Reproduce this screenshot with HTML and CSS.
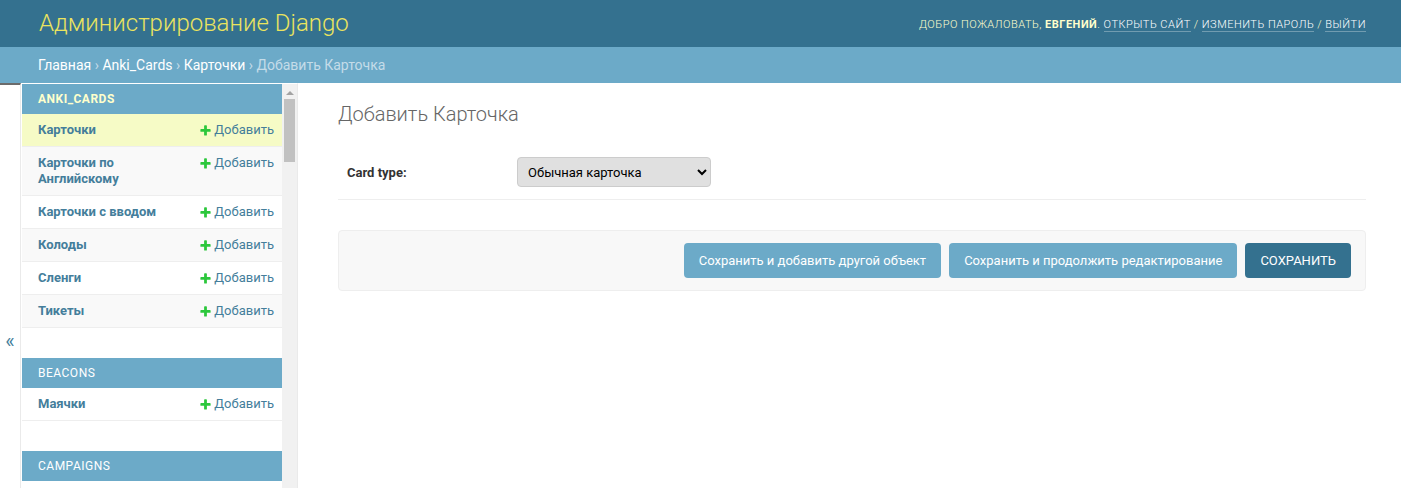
FILE: index.html
```html
<!DOCTYPE html>
<html lang="ru">
<head>
<meta charset="utf-8">
<title>Добавить Карточка | Администрирование Django</title>
<link rel="stylesheet" href="styles.css">
</head>
<body>
<div class="container">
  <header class="header">
    <div class="branding"><h1 class="site-name">Администрирование Django</h1></div>
    <div class="user-tools">
      Добро пожаловать, <strong>Евгений</strong>.
      <a href="#">Открыть сайт</a> /
      <a href="#">Изменить пароль</a> /
      <a href="#">Выйти</a>
    </div>
  </header>
  <div class="breadcrumbs">
    <a href="#">Главная</a> › <a href="#">Anki_Cards</a> › <a href="#">Карточки</a> › Добавить Карточка
  </div>
  <div class="main">
    <button class="toggle-nav" type="button" aria-label="Переключить навигацию">«</button>
    <nav class="nav-sidebar">
      <div class="nav-inner">
        <div class="module current-app">
          <table>
            <caption><a href="#" class="section">Anki_Cards</a></caption>
            <tbody>
              <tr class="row1 current-model"><th><a href="#">Карточки</a></th><td><a href="#" class="addlink"><svg class="plus" viewBox="0 0 1792 1792"><path d="M1600 796v192q0 40-28 68t-68 28h-416v416q0 40-28 68t-68 28h-192q-40 0-68-28t-28-68v-416h-416q-40 0-68-28t-28-68v-192q0-40 28-68t68-28h416v-416q0-40 28-68t68-28h192q40 0 68 28t28 68v416h416q40 0 68 28t28 68z"/></svg>Добавить</a></td></tr>
              <tr class="row2"><th><a href="#">Карточки по Английскому</a></th><td><a href="#" class="addlink"><svg class="plus" viewBox="0 0 1792 1792"><path d="M1600 796v192q0 40-28 68t-68 28h-416v416q0 40-28 68t-68 28h-192q-40 0-68-28t-28-68v-416h-416q-40 0-68-28t-28-68v-192q0-40 28-68t68-28h416v-416q0-40 28-68t68-28h192q40 0 68 28t28 68v416h416q40 0 68 28t28 68z"/></svg>Добавить</a></td></tr>
              <tr class="row1"><th><a href="#">Карточки с вводом</a></th><td><a href="#" class="addlink"><svg class="plus" viewBox="0 0 1792 1792"><path d="M1600 796v192q0 40-28 68t-68 28h-416v416q0 40-28 68t-68 28h-192q-40 0-68-28t-28-68v-416h-416q-40 0-68-28t-28-68v-192q0-40 28-68t68-28h416v-416q0-40 28-68t68-28h192q40 0 68 28t28 68v416h416q40 0 68 28t28 68z"/></svg>Добавить</a></td></tr>
              <tr class="row2"><th><a href="#">Колоды</a></th><td><a href="#" class="addlink"><svg class="plus" viewBox="0 0 1792 1792"><path d="M1600 796v192q0 40-28 68t-68 28h-416v416q0 40-28 68t-68 28h-192q-40 0-68-28t-28-68v-416h-416q-40 0-68-28t-28-68v-192q0-40 28-68t68-28h416v-416q0-40 28-68t68-28h192q40 0 68 28t28 68v416h416q40 0 68 28t28 68z"/></svg>Добавить</a></td></tr>
              <tr class="row1"><th><a href="#">Сленги</a></th><td><a href="#" class="addlink"><svg class="plus" viewBox="0 0 1792 1792"><path d="M1600 796v192q0 40-28 68t-68 28h-416v416q0 40-28 68t-68 28h-192q-40 0-68-28t-28-68v-416h-416q-40 0-68-28t-28-68v-192q0-40 28-68t68-28h416v-416q0-40 28-68t68-28h192q40 0 68 28t28 68v416h416q40 0 68 28t28 68z"/></svg>Добавить</a></td></tr>
              <tr class="row2"><th><a href="#">Тикеты</a></th><td><a href="#" class="addlink"><svg class="plus" viewBox="0 0 1792 1792"><path d="M1600 796v192q0 40-28 68t-68 28h-416v416q0 40-28 68t-68 28h-192q-40 0-68-28t-28-68v-416h-416q-40 0-68-28t-28-68v-192q0-40 28-68t68-28h416v-416q0-40 28-68t68-28h192q40 0 68 28t28 68v416h416q40 0 68 28t28 68z"/></svg>Добавить</a></td></tr>
            </tbody>
          </table>
        </div>
        <div class="module">
          <table>
            <caption><a href="#" class="section">Beacons</a></caption>
            <tbody>
              <tr class="row1"><th><a href="#">Маячки</a></th><td><a href="#" class="addlink"><svg class="plus" viewBox="0 0 1792 1792"><path d="M1600 796v192q0 40-28 68t-68 28h-416v416q0 40-28 68t-68 28h-192q-40 0-68-28t-28-68v-416h-416q-40 0-68-28t-28-68v-192q0-40 28-68t68-28h416v-416q0-40 28-68t68-28h192q40 0 68 28t28 68v416h416q40 0 68 28t28 68z"/></svg>Добавить</a></td></tr>
            </tbody>
          </table>
        </div>
        <div class="module">
          <table>
            <caption><a href="#" class="section">Campaigns</a></caption>
          </table>
        </div>
      </div>
      <div class="scrollbar" aria-hidden="true">
        <span class="scroll-arrow"></span>
        <span class="scroll-thumb"></span>
      </div>
    </nav>
    <div class="content">
      <h1 class="page-title">Добавить Карточка</h1>
      <form class="change-form">
        <fieldset class="fieldset">
          <div class="form-row">
            <label class="required" for="id_card_type">Card type:</label>
            <select id="id_card_type" class="select">
              <option>Обычная карточка</option>
              <option>Карточка с вводом</option>
            </select>
          </div>
        </fieldset>
        <div class="submit-row">
          <button type="button" class="btn">Сохранить и добавить другой объект</button>
          <button type="button" class="btn">Сохранить и продолжить редактирование</button>
          <button type="button" class="btn btn-default">Сохранить</button>
        </div>
      </form>
    </div>
  </div>
</div>
</body>
</html>
```
FILE: styles.css
```css
html, body {
  margin: 0;
  padding: 0;
  height: 100%;
  overflow: hidden;
}
body {
  font-family: Roboto, "Liberation Sans", Arial, sans-serif;
  font-size: 14px;
  color: #333;
  background: #fff;
}
a { color: #447e9b; text-decoration: none; }

.container {
  display: flex;
  flex-direction: column;
}

/* Header */
.header {
  display: flex;
  justify-content: space-between;
  align-items: center;
  padding: 10px 35px 10px 39px;
  background: #34718f;
  color: #ffc;
}
.site-name {
  margin: 0;
  font-size: 24px;
  font-weight: 300;
  color: #ebe45e;
  line-height: 27px;
}
.user-tools {
  font-size: 11px;
  font-weight: 300;
  letter-spacing: 0.5px;
  text-transform: uppercase;
  text-align: right;
  color: #ffc;
  padding-top: 2px;
}
.user-tools strong { font-weight: 700; }
.user-tools a {
  color: #fff;
  border-bottom: 1px solid rgba(255, 255, 255, 0.3);
}

/* Breadcrumbs */
.breadcrumbs {
  background: #6caac8;
  padding: 10px 35px 10px 38px;
  font-size: 14px;
  line-height: 16px;
  color: #c4dce8;
}
.breadcrumbs a { color: #fff; }

/* Main */
.main {
  display: flex;
  min-height: 514px;
}
.toggle-nav {
  flex: 0 0 21px;
  width: 21px;
  padding: 0;
  margin: 0;
  border: 0;
  border-top: 2px solid #6b6b6b;
  border-right: 1px solid #eaeaea;
  background: #fff;
  color: #447e9b;
  font-family: Roboto, "Liberation Sans", Arial, sans-serif;
  font-size: 20px;
  display: flex;
  align-items: center;
  justify-content: center;
  box-sizing: border-box;
}
.nav-sidebar {
  flex: 0 0 277px;
  display: flex;
  box-sizing: border-box;
  height: 100vh;
  overflow: hidden;
  padding-left: 1px;
  border-top: 1px solid transparent;
  border-right: 1px solid #eaeaea;
  align-self: flex-start;
}
.nav-inner {
  flex: 0 0 260px;
  width: 260px;
}
.scrollbar {
  flex: 0 0 15px;
  display: flex;
  flex-direction: column;
  align-items: center;
  background: #f1f1f1;
}
.scroll-arrow {
  margin-top: 7px;
  width: 0;
  height: 0;
  border-left: 4px solid transparent;
  border-right: 4px solid transparent;
  border-bottom: 4px solid #a3a3a3;
}
.scroll-thumb {
  margin-top: 4px;
  width: 11px;
  height: 63px;
  background: #c1c1c1;
}
.module {
  margin-bottom: 30px;
}
.module table {
  width: 100%;
  border-collapse: collapse;
}
.module caption {
  background: #6caac8;
  color: #fff;
  text-align: left;
  padding: 8px 8px 8px 16px;
  font-size: 12px;
  line-height: 14px;
  letter-spacing: 0.5px;
  text-transform: uppercase;
}
.module caption a { color: #fff; }
.current-app caption a { color: #ffc; font-weight: 700; }
.module th, .module td {
  padding: 8px;
  font-size: 13px;
  line-height: 16px;
  border-bottom: 1px solid #eee;
  vertical-align: top;
  text-align: left;
}
.module th {
  width: 100%;
  padding-left: 16px;
  font-weight: 700;
}
.module td { white-space: nowrap; }
.row1 { background: #fff; }
.row2 { background: #f9f9f9; }
.current-model { background: #f6fbc6; }
.addlink {
  display: flex;
  align-items: center;
  height: 16px;
}
.plus {
  width: 13px;
  height: 13px;
  fill: #2cc73c;
  margin-right: 2px;
}

/* Content */
.content {
  flex: 1;
  padding: 20px 35px 20px 40px;
  min-width: 0;
}
.page-title {
  margin: 0 0 20px;
  font-size: 20px;
  font-weight: 300;
  color: #666;
  line-height: 23px;
}
.fieldset {
  margin: 0 0 30px;
  padding: 0;
  border: 0;
}
.form-row {
  display: flex;
  align-items: center;
  padding: 10px 10px 10px 9px;
  border-bottom: 1px solid #eee;
  font-size: 13px;
}
.form-row label {
  width: 160px;
  padding-right: 10px;
  font-weight: 700;
  color: #333;
  line-height: 1;
}
.select {
  width: 194px;
  height: 30px;
  margin: 1px 0 2px;
  padding: 5px 6px;
  border: 1px solid #ccc;
  border-radius: 4px;
  background-color: #e0e0e0;
  color: #000;
  font-family: Roboto, "Liberation Sans", Arial, sans-serif;
  font-size: 13px;
}
.submit-row {
  display: flex;
  justify-content: flex-end;
  gap: 8px;
  padding: 12px 14px;
  background: #f8f8f8;
  border: 1px solid #eee;
  border-radius: 4px;
}
.btn {
  height: 35px;
  padding: 10px 15px;
  border: 0;
  border-radius: 4px;
  background: #6caac8;
  color: #fff;
  font-family: Roboto, "Liberation Sans", Arial, sans-serif;
  font-size: 13px;
  line-height: 15px;
}
.btn-default {
  background: #34718f;
  text-transform: uppercase;
}
```
